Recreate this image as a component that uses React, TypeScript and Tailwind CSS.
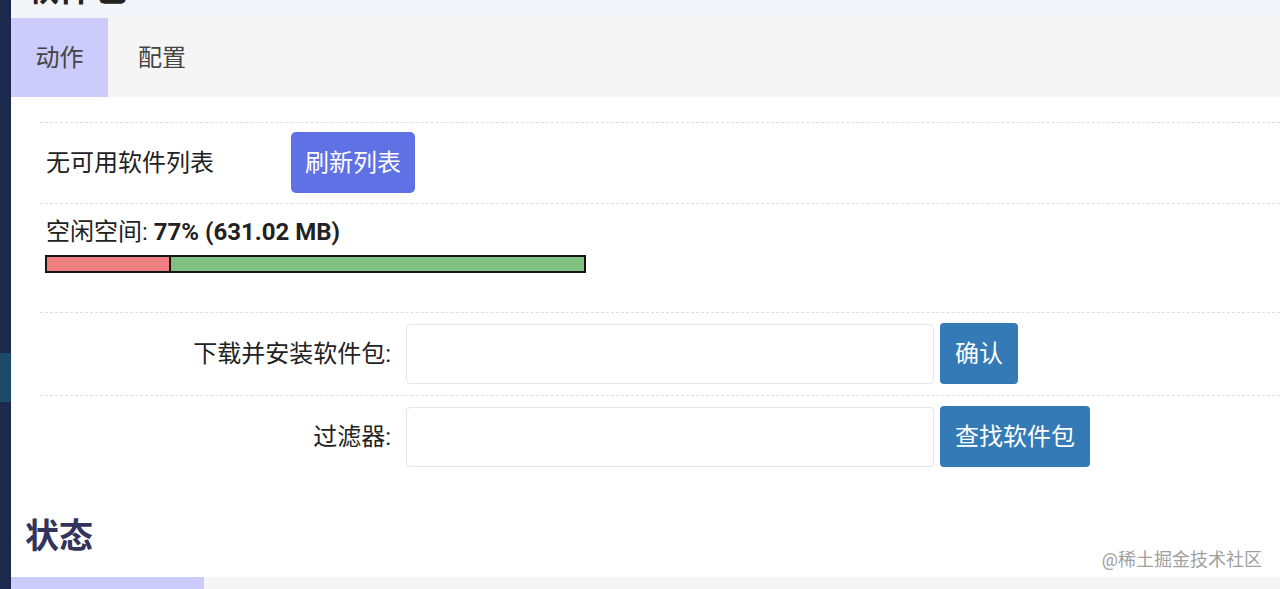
import React from "react";

const font = { fontFamily: "Roboto, 'Noto Sans CJK SC', sans-serif" };

export default function App() {
  return (
    <div className="flex w-full h-[589px] overflow-hidden bg-white text-[#222]" style={font}>
      <div className="w-[11px] shrink-0 flex flex-col bg-[#1b2a4c]">
        <div className="h-[353px] shrink-0" />
        <div className="h-[49px] shrink-0 bg-[#1d4a69]" />
        <div className="flex-1" />
      </div>
      <div className="relative flex-1 flex flex-col min-w-0">
        <div className="h-[18px] shrink-0 bg-[#f4f5fa] overflow-hidden pl-[14px]">
          <div className="mt-[-31px] text-[34px] leading-[40px] font-bold text-[#222]">软件包</div>
        </div>
        <div className="h-[79px] shrink-0 bg-[#f5f5f5] flex text-[24px] text-[#444]">
          <div className="w-[97px] bg-[#cbcbfc] flex items-center justify-center">动作</div>
          <div className="px-[30px] flex items-center">配置</div>
        </div>
        <div className="shrink-0 pl-[29px] pt-[25px] text-[24px] leading-[32px]">
          <div className="border-t border-dashed border-[#d9dfe6] pt-[9px] pb-[10px] flex items-center">
            <div className="w-[251px] pl-[6px]">无可用软件列表</div>
            <button className="h-[61px] px-[14px] bg-[#5f71e4] text-white rounded-[5px]">刷新列表</button>
          </div>
          <div className="border-t border-dashed border-[#d9dfe6] pt-[12px] pb-[39px] pl-[5px]">
            <div className="pl-[1px]">
              空闲空间: <span className="font-bold">77% (631.02 MB)</span>
            </div>
            <div className="mt-[7px] w-[541px] h-[18px] border-2 border-[#151515] flex bg-[#80c080]">
              <div className="w-[23%] h-full bg-[#f08080] border-r-2 border-[#151515]" />
            </div>
          </div>
          <div className="border-t border-dashed border-[#d9dfe6] pt-[10px] pb-[11px] flex items-center">
            <div className="w-[366px] text-right pr-[15px]">下载并安装软件包:</div>
            <div className="w-[528px] h-[60px] border border-[#e3e6ea] rounded-[4px]" />
            <button className="ml-[6px] h-[61px] px-[15px] bg-[#337ab7] text-white rounded-[4px]">确认</button>
          </div>
          <div className="border-t border-dashed border-[#d9dfe6] pt-[10px] flex items-center">
            <div className="w-[366px] text-right pr-[15px]">过滤器:</div>
            <div className="w-[528px] h-[60px] border border-[#e3e6ea] rounded-[4px]" />
            <button className="ml-[6px] h-[61px] px-[15px] bg-[#337ab7] text-white rounded-[4px]">查找软件包</button>
          </div>
        </div>
        <div className="shrink-0 pl-[14px] mt-[49px] text-[34px] leading-[40px] font-bold text-[#33335c]">状态</div>
        <div className="shrink-0 mt-[21px] h-[20px] bg-[#f5f5f5] flex">
          <div className="w-[193px] bg-[#cbcbfc]" />
        </div>
        <div className="absolute right-[18px] top-[548px] text-[18px] leading-[24px] text-[#a0a0a0]">@稀土掘金技术社区</div>
      </div>
    </div>
  );
}
